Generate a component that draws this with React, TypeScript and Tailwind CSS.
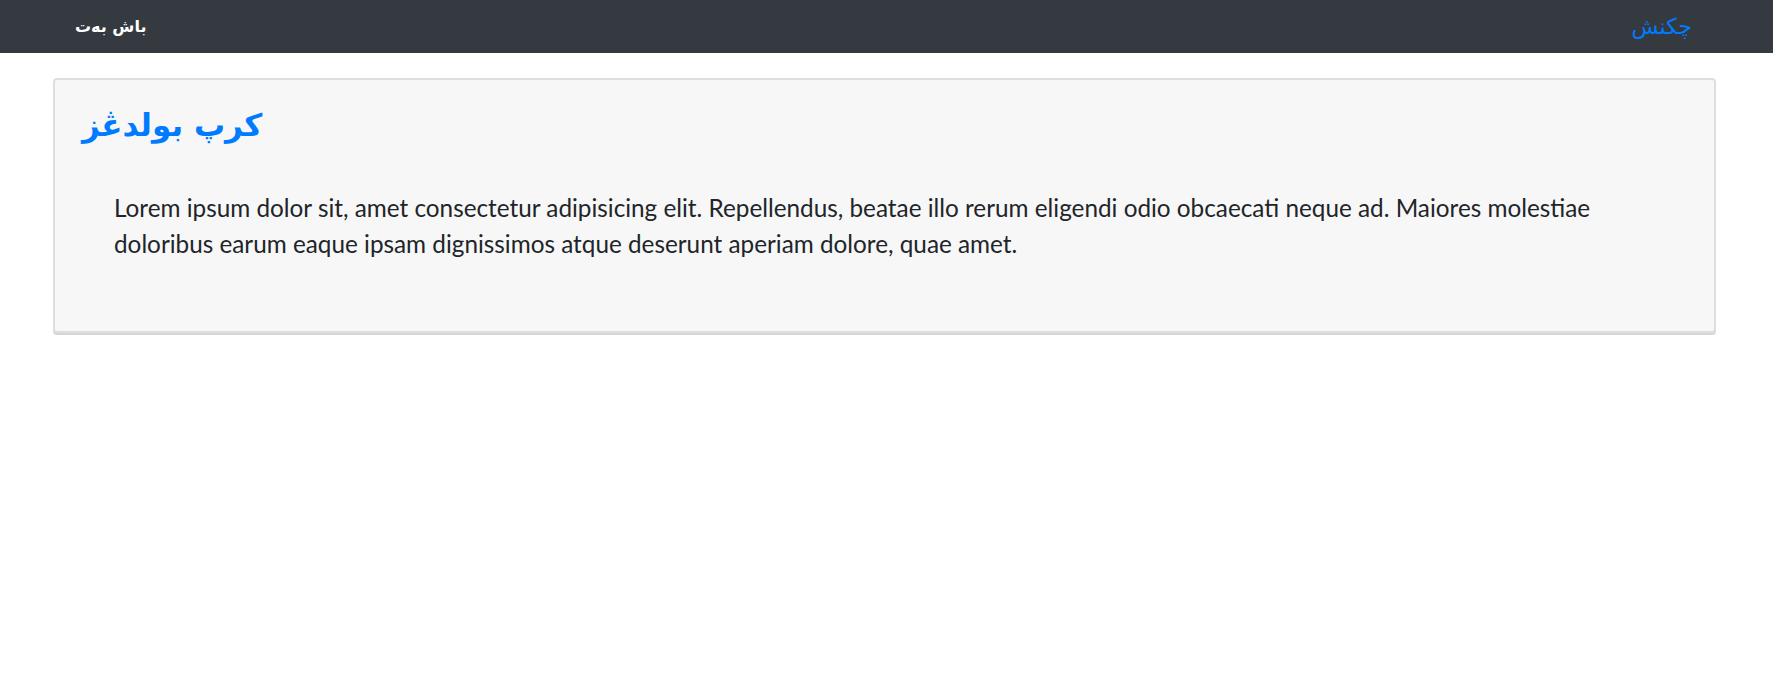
export default function App() {
  return (
    <div className="min-h-screen bg-white font-['Lato','DejaVu_Sans',sans-serif]">
      <nav className="flex h-[53px] items-center justify-between bg-[#343a40] pl-[75px] pr-[81px]">
        <a href="#" className="font-['DejaVu_Sans',sans-serif] text-[16px] font-bold text-white">
          باش بەت
        </a>
        <a href="#" className="font-['DejaVu_Sans',sans-serif] text-[22px] text-[#007bff]">
          چکنش
        </a>
      </nav>

      <div className="ml-[53px] mr-[57px] mt-[25px] rounded-[4px] border-2 border-[#dedede] bg-[#f7f7f7] shadow-[0_2px_0_#d6d6d6]">
        <div className="px-[27px] pb-[69px] pt-[24px]">
          <h2 className="font-['DejaVu_Sans',sans-serif] text-[31px] font-bold leading-[42px] text-[#007bff]">
            کرپ بولدڠز
          </h2>
          <p className="mt-[44px] px-[32px] text-[24.3px] leading-[36px] text-[#212529]">
            Lorem ipsum dolor sit, amet consectetur adipisicing elit. Repellendus, beatae illo rerum
            eligendi odio obcaecati neque ad. Maiores molestiae doloribus earum eaque ipsam dignissimos
            atque deserunt aperiam dolore, quae amet.
          </p>
        </div>
      </div>
    </div>
  )
}
